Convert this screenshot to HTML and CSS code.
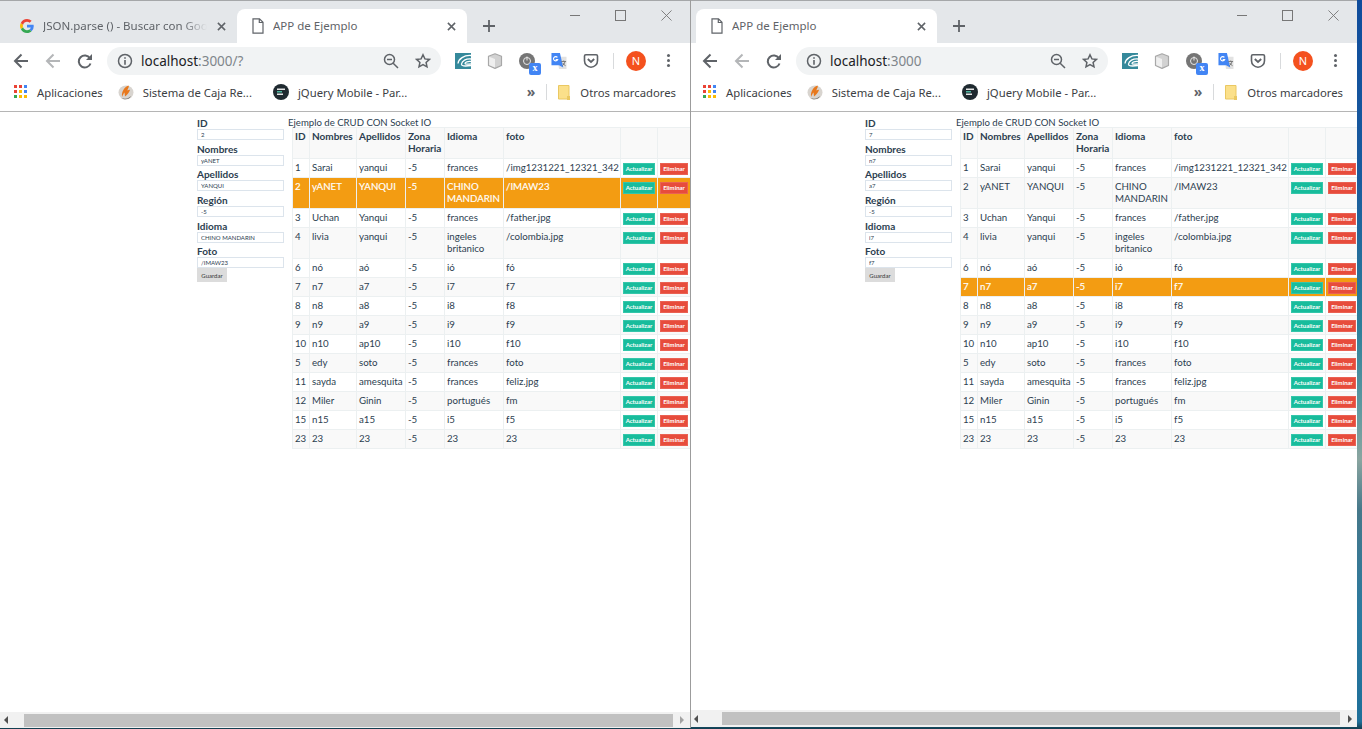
FILE: index.html
```html
<!DOCTYPE html>
<html lang="en">
<head>
    <meta charset="UTF-8">
    <title>APP de Ejemplo</title>
    <link rel="stylesheet" href="styles.css">
</head>
<body>

    <!-- shared icons -->
    <svg class="defs" width="0" height="0">
        <symbol id="i-google" viewBox="0 0 16 16">
            <path fill="#4285f4" d="M15.7 8.200c0-.6-.1-1.100-.2-1.600H8v3h4.300a3.700 3.700 0 0 1-1.600 2.400l2.500 2a7.600 7.600 0 0 0 2.500-5.800z"/>
            <path fill="#34a853" d="M8 16c2.200 0 4-.7 5.200-2l-2.500-2c-.7.500-1.600.8-2.700.8-2.100 0-3.800-1.400-4.500-3.300L.9 11.500A8 8 0 0 0 8 16z"/>
            <path fill="#fbbc05" d="M3.500 9.500a4.800 4.800 0 0 1 0-3L.9 4.500a8 8 0 0 0 0 7z"/>
            <path fill="#ea4335" d="M8 3.200c1.200 0 2.200.4 3 1.200l2.300-2.300A7.700 7.700 0 0 0 8 0 8 8 0 0 0 .9 4.500l2.600 2C4.200 4.600 5.900 3.200 8 3.200z"/>
        </symbol>
        <symbol id="i-doc" viewBox="0 0 12 16">
            <path fill="#fff" stroke="#5f6368" stroke-width="1.200" d="M1 .8h6.500L11 4.300v10.900H1zM7.300 .8v3.700H11"/>
        </symbol>
        <symbol id="i-close" viewBox="0 0 10 10">
            <path fill="none" stroke="#5f6368" stroke-width="1.700" d="M1 1l8 8M9 1l-8 8"/>
        </symbol>
        <symbol id="i-plus" viewBox="0 0 12 12">
            <path fill="none" stroke="#5f6368" stroke-width="1.800" d="M6 0v12M0 6h12"/>
        </symbol>
        <symbol id="i-arrow" viewBox="0 0 16 16">
            <path fill="none" stroke="currentColor" stroke-width="2" d="M15 8H2M8.500 1.500L2 8l6.500 6.500"/>
        </symbol>
        <symbol id="i-reload" viewBox="0 0 16 16">
            <path fill="none" stroke="#5f6368" stroke-width="2" d="M13.500 10.500a6 6 0 1 1-.6-5.200"/>
            <path fill="#5f6368" d="M15 1v6H9z"/>
        </symbol>
        <symbol id="i-info" viewBox="0 0 16 16">
            <circle cx="8" cy="8" r="6.500" fill="none" stroke="#5f6368" stroke-width="1.500"/>
            <path fill="#5f6368" d="M7.200 7h1.600v4.800H7.200zM7.200 4.200h1.600v1.600H7.200z"/>
        </symbol>
        <symbol id="i-zoom" viewBox="0 0 16 16">
            <circle cx="6.500" cy="6.500" r="5" fill="none" stroke="#5f6368" stroke-width="1.500"/>
            <path fill="none" stroke="#5f6368" stroke-width="1.500" d="M10.200 10.200l4.800 4.800M4 6.500h5"/>
        </symbol>
        <symbol id="i-star" viewBox="0 0 16 16">
            <path fill="none" stroke="#5f6368" stroke-width="1.500" d="M8 1.800l1.900 4.100 4.500.5-3.300 3 .9 4.400L8 11.600l-4 2.200.9-4.400-3.300-3 4.500-.5z"/>
        </symbol>
        <symbol id="i-ext1" viewBox="0 0 16 16">
            <rect width="16" height="16" fill="#35899b"/>
            <path fill="none" stroke="#fff" stroke-width="1.300" d="M16 2.500C9 2 3.500 6 3 10.500M16 6C11 5.500 7 8 6.500 11c-.3 2 3 2.500 9.500 1.500M16 8.500c-3-.3-6 .5-6 2 0 .8 3 .8 6 .3"/>
        </symbol>
        <symbol id="i-ext2" viewBox="0 0 16 16">
            <path fill="#d2d2d2" stroke="#a8a8a8" stroke-width="1.200" stroke-linejoin="round" d="M8 .8l6.500 2.400v9.300L8 15.400l-6.500-2.900V3.200z"/>
            <path fill="#efefef" d="M2.200 3.800L8 6v8.600l-5.800-2.600z"/>
        </symbol>
        <symbol id="i-ext3" viewBox="0 0 16 16">
            <circle cx="8" cy="8" r="8" fill="#757575"/>
            <circle cx="8" cy="8" r="3.500" fill="none" stroke="#e8e8e8" stroke-width="1"/>
            <path stroke="#e8e8e8" d="M8 3.500v4"/>
        </symbol>
        <symbol id="i-translate" viewBox="0 0 16 17">
            <path fill="#e2e2e2" d="M6 4h10v13H8z"/>
            <path fill="#4285f4" d="M0 0h9l3.500 15.500L8 13H0z"/>
            <path fill="none" stroke="#fff" stroke-width="1.200" d="M6.300 4.700a2.300 2.300 0 1 0 .3 2.300H4.500"/>
            <path fill="none" stroke="#757575" d="M10.500 9h5M13 8v1M14.500 9c-.5 2-1.500 3.500-3 4.500M12 10.500c.5 1.200 1.500 2.200 3 3"/>
        </symbol>
        <symbol id="i-pocket" viewBox="0 0 16 16">
            <path fill="none" stroke="#5f6368" stroke-width="1.600" d="M2.800 1.800h10.400c.8 0 1.300.5 1.300 1.300v4.600a6.500 6.500 0 0 1-13 0V3.100c0-.8.500-1.300 1.300-1.300z"/>
            <path fill="none" stroke="#5f6368" stroke-width="1.800" d="M4.800 6L8 9l3.200-3"/>
        </symbol>
        <symbol id="i-apps" viewBox="0 0 14 14">
            <path fill="#ea4335" d="M0 0h3v3H0zM5 0h3v3H5z"/>
            <path fill="#4285f4" d="M10 0h3v3h-3zM10 5h3v3h-3z"/>
            <path fill="#ea4335" d="M0 5h3v3H0z"/>
            <path fill="#fbbc05" d="M5 5h3v3H5zM5 10h3v3H5zM10 10h3v3h-3z"/>
            <path fill="#34a853" d="M0 10h3v3H0z"/>
        </symbol>
        <symbol id="i-caja" viewBox="0 0 16 16">
            <ellipse cx="8" cy="8.500" rx="7.500" ry="7" fill="#d8d4cf"/>
            <path fill="#e8781c" d="M4 12.500C3.500 8 6 3 10.500 1.500c1 2-1 3-1 5 1-.5 2-1 2.500-.5-1 3-3 5-5 6.500l-.5-4c-1 1-1.500 2.500-2.500 4.500z"/>
            <path fill="#55504a" d="M3 14c3 1.500 7 1 10-2-2 4-7 4-10 2z"/>
        </symbol>
        <symbol id="i-jquery" viewBox="0 0 16 16">
            <circle cx="8" cy="8" r="8" fill="#1f2a30"/>
            <path fill="#e6e6e6" d="M4 4.500h8v1.500H4z"/>
            <path fill="#4db6a0" d="M4 7h5v1.500H4z"/>
            <path fill="#e6e6e6" d="M4 9.500h6V11H4z"/>
        </symbol>
        <symbol id="i-folder" viewBox="0 0 12 15">
            <path fill="#fbe08a" stroke="#eac862" d="M.5.500h10.500v13.500H.5z"/>
            <path fill="#eac862" d="M9 11h3v4H9z"/>
        </symbol>
    </svg>

    <!-- left window -->
    <div class="window window-left">
        <div class="tabstrip">
            <div class="tab tab-back">
                <svg class="favicon"><use href="#i-google"/></svg>
                <span class="tab-title tab-fade">JSON.parse () - Buscar con Google</span>
                <svg class="tab-close"><use href="#i-close"/></svg>
            </div>
            <div class="tab tab-active">
                <svg class="docicon"><use href="#i-doc"/></svg>
                <span class="tab-title">APP de Ejemplo</span>
                <svg class="tab-close"><use href="#i-close"/></svg>
            </div>
            <svg class="new-tab"><use href="#i-plus"/></svg>
            <div class="win-controls">
                <span class="win-min"></span>
                <span class="win-max"></span>
                <svg class="win-close" viewBox="0 0 12 12"><path d="M.5.500l11 11M11.500.500l-11 11"/></svg>
            </div>
        </div>
        <div class="toolbar">
            <span class="slot back"><svg class="ico"><use href="#i-arrow"/></svg></span>
            <span class="slot fwd"><svg class="ico"><use href="#i-arrow"/></svg></span>
            <span class="slot"><svg class="ico"><use href="#i-reload"/></svg></span>
            <div class="omnibox">
                <svg class="ico"><use href="#i-info"/></svg>
                <span class="url">localhost<span class="url-dim">:3000/?</span></span>
                <svg class="ico omni-zoom"><use href="#i-zoom"/></svg>
                <svg class="ico omni-star"><use href="#i-star"/></svg>
            </div>
            <span class="slot first-ext"><svg class="ico"><use href="#i-ext1"/></svg></span>
            <span class="slot"><svg class="ico"><use href="#i-ext2"/></svg></span>
            <span class="slot"><svg class="ico"><use href="#i-ext3"/></svg><span class="x-badge">x</span></span>
            <span class="slot"><svg class="ico"><use href="#i-translate"/></svg></span>
            <span class="slot"><svg class="ico"><use href="#i-pocket"/></svg></span>
            <span class="tool-sep"></span>
            <span class="slot"><span class="avatar">N</span></span>
            <span class="slot"><span class="menu-dots"></span></span>
        </div>
        <div class="bookmarks">
            <svg class="bm-apps"><use href="#i-apps"/></svg>
            <span class="bm-text bm-first">Aplicaciones</span>
            <svg class="bm-ico"><use href="#i-caja"/></svg>
            <span class="bm-text bm-caja">Sistema de Caja Re...</span>
            <svg class="bm-ico"><use href="#i-jquery"/></svg>
            <span class="bm-text">jQuery Mobile - Par...</span>
            <span class="bm-more">»</span>
            <span class="bm-sep"></span>
            <svg class="bm-folder"><use href="#i-folder"/></svg>
            <span class="bm-text">Otros marcadores</span>
        </div>
        <div class="page">
            <form class="crud-form">
                <label>ID</label><input value="2">
                <label>Nombres</label><input value="yANET">
                <label>Apellidos</label><input value="YANQUI">
                <label>Región</label><input value="-5">
                <label>Idioma</label><input value="CHINO MANDARIN">
                <label>Foto</label><input value="/IMAW23">
                <button type="button" class="btn-save">Guardar</button>
            </form>
            <div class="crud">
                <div class="crud-title">Ejemplo de CRUD CON Socket IO</div>
                <table>
                    <colgroup>
                        <col class="c-id"><col class="c-nom"><col class="c-ape"><col class="c-zona"><col class="c-idi"><col class="c-foto"><col class="c-act"><col class="c-del">
                    </colgroup>
                    <thead>
                        <tr><th>ID</th><th>Nombres</th><th>Apellidos</th><th>Zona Horaria</th><th>Idioma</th><th>foto</th><th></th><th></th></tr>
                    </thead>
                    <tbody>
                        <tr><td>1</td><td>Sarai</td><td>yanqui</td><td>-5</td><td>frances</td><td>/img1231221_12321_342</td><td><a class="btn btn-up">Actualizar</a></td><td><a class="btn btn-del">Eliminar</a></td></tr>
                        <tr class="selected"><td>2</td><td>yANET</td><td>YANQUI</td><td>-5</td><td>CHINO MANDARIN</td><td>/IMAW23</td><td><a class="btn btn-up">Actualizar</a></td><td><a class="btn btn-del">Eliminar</a></td></tr>
                        <tr><td>3</td><td>Uchan</td><td>Yanqui</td><td>-5</td><td>frances</td><td>/father.jpg</td><td><a class="btn btn-up">Actualizar</a></td><td><a class="btn btn-del">Eliminar</a></td></tr>
                        <tr><td>4</td><td>livia</td><td>yanqui</td><td>-5</td><td>ingeles britanico</td><td>/colombia.jpg</td><td><a class="btn btn-up">Actualizar</a></td><td><a class="btn btn-del">Eliminar</a></td></tr>
                        <tr><td>6</td><td>nó</td><td>aó</td><td>-5</td><td>ió</td><td>fó</td><td><a class="btn btn-up">Actualizar</a></td><td><a class="btn btn-del">Eliminar</a></td></tr>
                        <tr><td>7</td><td>n7</td><td>a7</td><td>-5</td><td>i7</td><td>f7</td><td><a class="btn btn-up">Actualizar</a></td><td><a class="btn btn-del">Eliminar</a></td></tr>
                        <tr><td>8</td><td>n8</td><td>a8</td><td>-5</td><td>i8</td><td>f8</td><td><a class="btn btn-up">Actualizar</a></td><td><a class="btn btn-del">Eliminar</a></td></tr>
                        <tr><td>9</td><td>n9</td><td>a9</td><td>-5</td><td>i9</td><td>f9</td><td><a class="btn btn-up">Actualizar</a></td><td><a class="btn btn-del">Eliminar</a></td></tr>
                        <tr><td>10</td><td>n10</td><td>ap10</td><td>-5</td><td>i10</td><td>f10</td><td><a class="btn btn-up">Actualizar</a></td><td><a class="btn btn-del">Eliminar</a></td></tr>
                        <tr><td>5</td><td>edy</td><td>soto</td><td>-5</td><td>frances</td><td>foto</td><td><a class="btn btn-up">Actualizar</a></td><td><a class="btn btn-del">Eliminar</a></td></tr>
                        <tr><td>11</td><td>sayda</td><td>amesquita</td><td>-5</td><td>frances</td><td>feliz.jpg</td><td><a class="btn btn-up">Actualizar</a></td><td><a class="btn btn-del">Eliminar</a></td></tr>
                        <tr><td>12</td><td>Miler</td><td>Ginin</td><td>-5</td><td>portugués</td><td>fm</td><td><a class="btn btn-up">Actualizar</a></td><td><a class="btn btn-del">Eliminar</a></td></tr>
                        <tr><td>15</td><td>n15</td><td>a15</td><td>-5</td><td>i5</td><td>f5</td><td><a class="btn btn-up">Actualizar</a></td><td><a class="btn btn-del">Eliminar</a></td></tr>
                        <tr><td>23</td><td>23</td><td>23</td><td>-5</td><td>23</td><td>23</td><td><a class="btn btn-up">Actualizar</a></td><td><a class="btn btn-del">Eliminar</a></td></tr>
                    </tbody>
                </table>
            </div>
        </div>
        <div class="hscroll">
            <span class="arrow arrow-l"></span>
            <span class="thumb"></span>
            <span class="arrow arrow-r"></span>
        </div>
    </div>

    <!-- right window -->
    <div class="window window-right">
        <div class="tabstrip">
            <div class="tab tab-active">
                <svg class="docicon"><use href="#i-doc"/></svg>
                <span class="tab-title">APP de Ejemplo</span>
                <svg class="tab-close"><use href="#i-close"/></svg>
            </div>
            <svg class="new-tab"><use href="#i-plus"/></svg>
            <div class="win-controls">
                <span class="win-min"></span>
                <span class="win-max"></span>
                <svg class="win-close" viewBox="0 0 12 12"><path d="M.5.500l11 11M11.500.500l-11 11"/></svg>
            </div>
        </div>
        <div class="toolbar">
            <span class="slot back"><svg class="ico"><use href="#i-arrow"/></svg></span>
            <span class="slot fwd"><svg class="ico"><use href="#i-arrow"/></svg></span>
            <span class="slot"><svg class="ico"><use href="#i-reload"/></svg></span>
            <div class="omnibox">
                <svg class="ico"><use href="#i-info"/></svg>
                <span class="url">localhost<span class="url-dim">:3000</span></span>
                <svg class="ico omni-zoom"><use href="#i-zoom"/></svg>
                <svg class="ico omni-star"><use href="#i-star"/></svg>
            </div>
            <span class="slot first-ext"><svg class="ico"><use href="#i-ext1"/></svg></span>
            <span class="slot"><svg class="ico"><use href="#i-ext2"/></svg></span>
            <span class="slot"><svg class="ico"><use href="#i-ext3"/></svg><span class="x-badge">x</span></span>
            <span class="slot"><svg class="ico"><use href="#i-translate"/></svg></span>
            <span class="slot"><svg class="ico"><use href="#i-pocket"/></svg></span>
            <span class="tool-sep"></span>
            <span class="slot"><span class="avatar">N</span></span>
            <span class="slot"><span class="menu-dots"></span></span>
        </div>
        <div class="bookmarks">
            <svg class="bm-apps"><use href="#i-apps"/></svg>
            <span class="bm-text bm-first">Aplicaciones</span>
            <svg class="bm-ico"><use href="#i-caja"/></svg>
            <span class="bm-text bm-caja">Sistema de Caja Re...</span>
            <svg class="bm-ico"><use href="#i-jquery"/></svg>
            <span class="bm-text">jQuery Mobile - Par...</span>
            <span class="bm-more">»</span>
            <span class="bm-sep"></span>
            <svg class="bm-folder"><use href="#i-folder"/></svg>
            <span class="bm-text">Otros marcadores</span>
        </div>
        <div class="page">
            <form class="crud-form">
                <label>ID</label><input value="7">
                <label>Nombres</label><input value="n7">
                <label>Apellidos</label><input value="a7">
                <label>Región</label><input value="-5">
                <label>Idioma</label><input value="i7">
                <label>Foto</label><input value="f7">
                <button type="button" class="btn-save">Guardar</button>
            </form>
            <div class="crud">
                <div class="crud-title">Ejemplo de CRUD CON Socket IO</div>
                <table>
                    <colgroup>
                        <col class="c-id"><col class="c-nom"><col class="c-ape"><col class="c-zona"><col class="c-idi"><col class="c-foto"><col class="c-act"><col class="c-del">
                    </colgroup>
                    <thead>
                        <tr><th>ID</th><th>Nombres</th><th>Apellidos</th><th>Zona Horaria</th><th>Idioma</th><th>foto</th><th></th><th></th></tr>
                    </thead>
                    <tbody>
                        <tr><td>1</td><td>Sarai</td><td>yanqui</td><td>-5</td><td>frances</td><td>/img1231221_12321_342</td><td><a class="btn btn-up">Actualizar</a></td><td><a class="btn btn-del">Eliminar</a></td></tr>
                        <tr><td>2</td><td>yANET</td><td>YANQUI</td><td>-5</td><td>CHINO MANDARIN</td><td>/IMAW23</td><td><a class="btn btn-up">Actualizar</a></td><td><a class="btn btn-del">Eliminar</a></td></tr>
                        <tr><td>3</td><td>Uchan</td><td>Yanqui</td><td>-5</td><td>frances</td><td>/father.jpg</td><td><a class="btn btn-up">Actualizar</a></td><td><a class="btn btn-del">Eliminar</a></td></tr>
                        <tr><td>4</td><td>livia</td><td>yanqui</td><td>-5</td><td>ingeles britanico</td><td>/colombia.jpg</td><td><a class="btn btn-up">Actualizar</a></td><td><a class="btn btn-del">Eliminar</a></td></tr>
                        <tr><td>6</td><td>nó</td><td>aó</td><td>-5</td><td>ió</td><td>fó</td><td><a class="btn btn-up">Actualizar</a></td><td><a class="btn btn-del">Eliminar</a></td></tr>
                        <tr class="selected"><td>7</td><td>n7</td><td>a7</td><td>-5</td><td>i7</td><td>f7</td><td><a class="btn btn-up">Actualizar</a></td><td><a class="btn btn-del">Eliminar</a></td></tr>
                        <tr><td>8</td><td>n8</td><td>a8</td><td>-5</td><td>i8</td><td>f8</td><td><a class="btn btn-up">Actualizar</a></td><td><a class="btn btn-del">Eliminar</a></td></tr>
                        <tr><td>9</td><td>n9</td><td>a9</td><td>-5</td><td>i9</td><td>f9</td><td><a class="btn btn-up">Actualizar</a></td><td><a class="btn btn-del">Eliminar</a></td></tr>
                        <tr><td>10</td><td>n10</td><td>ap10</td><td>-5</td><td>i10</td><td>f10</td><td><a class="btn btn-up">Actualizar</a></td><td><a class="btn btn-del">Eliminar</a></td></tr>
                        <tr><td>5</td><td>edy</td><td>soto</td><td>-5</td><td>frances</td><td>foto</td><td><a class="btn btn-up">Actualizar</a></td><td><a class="btn btn-del">Eliminar</a></td></tr>
                        <tr><td>11</td><td>sayda</td><td>amesquita</td><td>-5</td><td>frances</td><td>feliz.jpg</td><td><a class="btn btn-up">Actualizar</a></td><td><a class="btn btn-del">Eliminar</a></td></tr>
                        <tr><td>12</td><td>Miler</td><td>Ginin</td><td>-5</td><td>portugués</td><td>fm</td><td><a class="btn btn-up">Actualizar</a></td><td><a class="btn btn-del">Eliminar</a></td></tr>
                        <tr><td>15</td><td>n15</td><td>a15</td><td>-5</td><td>i5</td><td>f5</td><td><a class="btn btn-up">Actualizar</a></td><td><a class="btn btn-del">Eliminar</a></td></tr>
                        <tr><td>23</td><td>23</td><td>23</td><td>-5</td><td>23</td><td>23</td><td><a class="btn btn-up">Actualizar</a></td><td><a class="btn btn-del">Eliminar</a></td></tr>
                    </tbody>
                </table>
            </div>
        </div>
        <div class="hscroll">
            <span class="arrow arrow-l"></span>
            <span class="thumb"></span>
            <span class="arrow arrow-r"></span>
        </div>
    </div>

</body>
</html>
```

FILE: styles.css
```css
html, body {
    height: 100%;
}
body {
    margin: 0;
    display: flex;
    overflow: hidden;
    font-family: Lato, Arial, sans-serif;
    background: linear-gradient(#0f4c9c 0, #1a5c9e 25%, #2f7f9a 45%, #5f9aa0 56%, #8aa5a0 63%, #46788a 70%, #2a7aa0 85%, #1f6f99 99%, #123c4c 100%);
}
.defs {
    position: absolute;
}

/* windows */
.window {
    display: flex;
    flex-direction: column;
    height: 728px;
    background: #fff;
    overflow: hidden;
}
.window-left {
    width: 690px;
    border-right: 1px solid #9c9c9c;
}
.window-right {
    width: 666px;
    height: 727px;
}

/* tab strip */
.tabstrip {
    display: flex;
    align-items: flex-end;
    height: 43px;
    flex: none;
    background: #e4e7ea;
    border-top: 1px solid #a5a7a9;
    box-sizing: border-box;
}
.tab {
    display: flex;
    align-items: center;
    height: 34px;
    box-sizing: border-box;
    font-family: "Noto Sans", Arial, sans-serif;
    font-size: 11.5px;
    color: #5f6368;
}
.tab-back {
    width: 237px;
    padding-left: 20px;
}
.window-left .tab-active {
    width: 230px;
}
.window-right .tab-active {
    width: 241px;
    margin-left: 5px;
}
.tab-active {
    background: #fff;
    border-radius: 8px 8px 0 0;
    padding-left: 15px;
}
.favicon {
    width: 14px;
    height: 14px;
    margin-right: 9px;
    flex: none;
}
.docicon {
    width: 12px;
    height: 16px;
    margin-right: 9px;
    flex: none;
}
.tab-title {
    flex: 1;
    min-width: 0;
    overflow: hidden;
    white-space: nowrap;
    padding-bottom: 2px;
}
.tab-fade {
    -webkit-mask-image: linear-gradient(to right, #000 85%, transparent 100%);
    mask-image: linear-gradient(to right, #000 85%, transparent 100%);
}
.tab-close {
    width: 9px;
    height: 9px;
    margin: 0 11px 0 10px;
    flex: none;
}
.new-tab {
    width: 12px;
    height: 12px;
    margin: 0 0 11px 16px;
    flex: none;
}
.win-controls {
    display: flex;
    align-items: center;
    margin-left: auto;
    align-self: flex-start;
    height: 28px;
    padding-right: 18px;
}
.win-min {
    width: 10px;
    height: 1px;
    background: #777;
}
.win-max {
    width: 9px;
    height: 9px;
    border: 1px solid #777;
    margin-left: 35px;
}
.win-close {
    width: 11px;
    height: 11px;
    margin-left: 35px;
    stroke: #777;
    fill: none;
}

/* toolbar */
.toolbar {
    display: flex;
    align-items: center;
    height: 35px;
    flex: none;
    padding: 0 6px 0 5px;
}
.window-right .toolbar {
    padding-left: 3px;
}
.slot {
    width: 32px;
    height: 28px;
    display: flex;
    align-items: center;
    justify-content: center;
    flex: none;
    position: relative;
    color: #5f6368;
}
.fwd {
    color: #b4b6b8;
}
.ico {
    width: 16px;
    height: 16px;
    flex: none;
}
.omnibox {
    flex: 1;
    display: flex;
    align-items: center;
    height: 28px;
    margin-left: 6px;
    padding: 0 10px;
    background: #f1f3f4;
    border-radius: 14px;
    font-family: "Noto Sans", Arial, sans-serif;
    font-size: 13.5px;
    color: #202124;
}
.url {
    margin-left: 8px;
    flex: 1;
}
.url-dim {
    color: #80868b;
}
.omni-star {
    margin-left: 16px;
}
.first-ext {
    margin-left: 6px;
}
.x-badge {
    position: absolute;
    left: 18px;
    top: 16px;
    width: 12px;
    height: 12px;
    border-radius: 2px;
    background: #4285f4;
    color: #fff;
    font: bold 10px/10px "Liberation Serif", serif;
    text-align: center;
}
.tool-sep {
    width: 1px;
    height: 16px;
    background: #d8dadc;
    margin: 0 6px;
    flex: none;
}
.avatar {
    width: 20px;
    height: 20px;
    border-radius: 50%;
    background: #f4511e;
    color: #fff;
    font: 11px/20px "Noto Sans", Arial, sans-serif;
    text-align: center;
}
.menu-dots {
    width: 3px;
    height: 3px;
    border-radius: 50%;
    background: #5f6368;
    box-shadow: 0 -5px 0 #5f6368, 0 5px 0 #5f6368;
}

/* bookmarks */
.bookmarks {
    display: flex;
    align-items: center;
    height: 34px;
    flex: none;
    padding: 0 14px 5px 13px;
    box-sizing: border-box;
    border-bottom: 1px solid #b5b5b5;
    font-family: "Noto Sans", Arial, sans-serif;
    font-size: 11.3px;
    color: #3c4043;
}
.window-left .bookmarks {
    padding-left: 14px;
}
.window-right .bookmarks {
    padding-left: 12px;
}
.bm-apps {
    width: 14px;
    height: 14px;
    margin-right: 9px;
    flex: none;
}
.bm-ico {
    width: 16px;
    height: 16px;
    margin-right: 9px;
    flex: none;
}
.bm-text {
    white-space: nowrap;
}
.bm-first {
    margin-right: 15px;
}
.bm-caja {
    margin-right: 21px;
}
.bm-more {
    margin-left: auto;
    font-size: 14px;
    font-weight: bold;
    line-height: 14px;
    color: #5f6368;
}
.bm-sep {
    width: 1px;
    height: 16px;
    background: #d8dadc;
    margin: 0 11px;
}
.bm-folder {
    width: 12px;
    height: 15px;
    margin-right: 10px;
    flex: none;
}

/* page content */
.page {
    flex: 1;
    display: flex;
    justify-content: flex-end;
    align-items: flex-start;
    color: #2c3e50;
    font-size: 9.7px;
}
.window-right .page {
    margin-right: -1px;
}
.crud-form {
    display: flex;
    flex-direction: column;
    width: 87px;
    margin-top: 5px;
}
.crud-form label {
    font-weight: bold;
    font-size: 10px;
    line-height: 12px;
    margin-top: 2.700px;
}
.crud-form label:first-child {
    margin-top: 0;
}
.crud-form input {
    height: 11px;
    width: 100%;
    box-sizing: border-box;
    margin: 0;
    padding: 0 3px;
    border: 1px solid #dce4ec;
    font-family: Lato, Arial, sans-serif;
    font-size: 6px;
    color: #2c3e50;
    outline: none;
}
.btn-save {
    width: 30px;
    height: 14px;
    padding: 0;
    border: none;
    background: #dcdcdc;
    color: #333;
    font-family: Lato, Arial, sans-serif;
    font-size: 6px;
}
.crud {
    width: 402px;
    margin-left: 4px;
    margin-top: 5px;
}
.crud-title {
    font-size: 9.600px;
    line-height: 11px;
    margin-bottom: -1px;
    white-space: nowrap;
}
table {
    border-collapse: collapse;
    table-layout: fixed;
    width: 398px;
    margin-left: 4px;
}
.c-id { width: 17px; }
.c-nom { width: 47px; }
.c-ape { width: 49px; }
.c-zona { width: 39px; }
.c-idi { width: 59px; }
.c-foto { width: 117px; }
.c-act { width: 37px; }
.c-del { width: 33px; }
th, td {
    padding: 2px 1px 4px 2px;
    line-height: 12px;
    text-align: left;
    vertical-align: top;
    border: 1px solid #ecf0f1;
}
th {
    font-weight: bold;
    font-size: 10px;
}
thead tr {
    background: #f9f9f9;
}
tbody tr:nth-child(even) {
    background: #f9f9f9;
}
tbody tr.selected {
    background: #f39c12;
    color: #fff;
    -webkit-text-stroke: 0.15px #fff;
}
.btn {
    display: block;
    box-sizing: border-box;
    height: 12px;
    margin: 2px 1px -2px 0;
    border: 1px solid;
    font-size: 6px;
    font-weight: bold;
    line-height: 10px;
    text-align: center;
    color: #fff;
    -webkit-text-stroke: 0;
}
.btn-up {
    background: #18bc9c;
    border-color: #34c6aa;
}
.btn-del {
    background: #e74c3c;
    border-color: #ea6153;
}

/* horizontal scrollbar */
.hscroll {
    display: flex;
    align-items: center;
    height: 16px;
    flex: none;
    background: #f1f1f1;
}
.window-right .hscroll {
    height: 17px;
}
.thumb {
    flex: 1;
    height: 13px;
    margin: 1px 7px 0 16px;
    background: #c1c1c1;
}
.window-right .thumb {
    margin: 0 8px 0 24px;
}
.arrow {
    width: 0;
    height: 0;
    border-top: 4px solid transparent;
    border-bottom: 4px solid transparent;
}
.arrow-l {
    margin-left: 4px;
    border-right: 4px solid #505050;
}
.arrow-r {
    margin-right: 6px;
    border-left: 4px solid #a3a3a3;
}
.window-right .arrow-l {
    margin-left: 3px;
}
.window-right .arrow-r {
    margin-right: 5px;
    border-left-color: #505050;
}
```
